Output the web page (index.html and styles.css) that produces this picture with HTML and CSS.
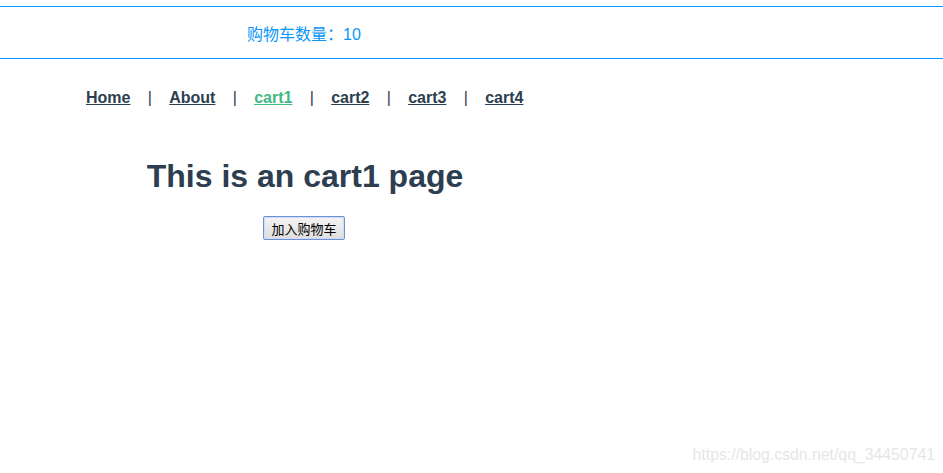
FILE: index.html
```html
<!DOCTYPE html>
<html lang="zh-CN">
<head>
<meta charset="utf-8">
<title>cart1</title>
<link rel="stylesheet" href="styles.css">
</head>
<body>
<div class="app">
  <header class="cart-bar">
    <span class="cart-count">购物车数量：10</span>
  </header>
  <nav class="nav">
    <a class="nav-link" href="#">Home</a>
    <span class="sep">|</span>
    <a class="nav-link" href="#">About</a>
    <span class="sep">|</span>
    <a class="nav-link active" href="#">cart1</a>
    <span class="sep">|</span>
    <a class="nav-link" href="#">cart2</a>
    <span class="sep">|</span>
    <a class="nav-link" href="#">cart3</a>
    <span class="sep">|</span>
    <a class="nav-link" href="#">cart4</a>
  </nav>
  <main class="page">
    <h1 class="title">This is an cart1 page</h1>
    <button class="add-btn" type="button">加入购物车</button>
  </main>
</div>
<div class="watermark">https://blog.csdn.net/qq_34450741</div>
</body>
</html>
```
FILE: styles.css
```css
html, body {
  margin: 0;
  padding: 0;
  background: #ffffff;
}
body {
  font-family: "Liberation Sans", Arial, "Noto Sans CJK SC", sans-serif;
  position: relative;
  width: 943px;
  height: 473px;
  overflow: hidden;
}
.cart-bar {
  margin-top: 6px;
  height: 51px;
  border-top: 1px solid #0099ff;
  border-bottom: 1px solid #0099ff;
  display: flex;
  align-items: center;
  padding-left: 247px;
}
.cart-count {
  color: #0a96f7;
  font-size: 16px;
  font-family: "Liberation Sans", "Noto Sans CJK SC", sans-serif;
}
.nav {
  display: flex;
  align-items: baseline;
  gap: 17.3px;
  padding: 30px 0 0 86px;
  font-size: 16px;
  font-weight: bold;
  line-height: 18px;
}
.nav-link {
  color: #2c3e50;
  text-decoration: underline;
}
.nav-link.active {
  color: #42b983;
}
.sep {
  color: #2c3e50;
  font-weight: normal;
}
.page {
  width: 400px;
  margin-left: 105px;
  margin-top: 51px;
  text-align: center;
}
.title {
  margin: 0;
  font-size: 32px;
  line-height: 37px;
  font-weight: bold;
  color: #2c3e50;
}
.add-btn {
  margin-top: 21px;
  margin-right: 2px;
  height: 24px;
  padding: 0 7px;
  font-family: "Noto Sans CJK SC", sans-serif;
  font-size: 13px;
  color: #000000;
  border: 1px solid #6e8fd2;
  border-radius: 2px;
  background: linear-gradient(#f4f4f4, #dedede);
  box-shadow: inset 0 0 0 1px #cfdcf3;
}
.watermark {
  position: absolute;
  right: 8px;
  bottom: 9px;
  font-size: 15.8px;
  color: #e6e6e6;
}
```
